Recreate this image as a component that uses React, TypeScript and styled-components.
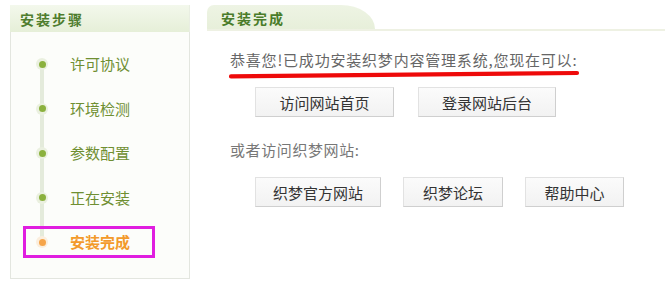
import React from 'react';
import styled, { createGlobalStyle } from 'styled-components';

const GlobalStyle = createGlobalStyle`
  html, body {
    margin: 0;
    padding: 0;
    background: #ffffff;
  }
  body {
    font-family: "Noto Sans CJK SC", "Noto Sans", sans-serif;
  }
`;

const steps = ['许可协议', '环境检测', '参数配置', '正在安装', '安装完成'];

const App = () => {
  return (
    <Page>
      <GlobalStyle />
      <Sidebar>
        <SideHeader>安装步骤</SideHeader>
        <SideBody>
          <StepList>
            {steps.map((s, i) => (
              <Step key={s} $active={i === steps.length - 1}>
                <Dot $active={i === steps.length - 1} />
                <StepLabel $active={i === steps.length - 1}>{s}</StepLabel>
              </Step>
            ))}
          </StepList>
        </SideBody>
      </Sidebar>

      <Main>
        <TabBar>
          <Tab>安装完成</Tab>
        </TabBar>
        <Content>
          <Message>恭喜您!已成功安装织梦内容管理系统,您现在可以:</Message>
          {/* hand-drawn red mark under the message */}
          <Underline width="352" height="9" viewBox="0 0 352 9">
            <path
              d="M3 6.4 C 90 6, 200 5.2, 349 3"
              stroke="#ee0a0a"
              strokeWidth="4.2"
              strokeLinecap="round"
              fill="none"
            />
          </Underline>
          <ButtonRow $top={8}>
            <Btn $w={139}>访问网站首页</Btn>
            <Btn $w={138}>登录网站后台</Btn>
          </ButtonRow>
          <SubText>或者访问织梦网站:</SubText>
          <ButtonRow $top={17} $gap={22}>
            <Btn $w={126}>织梦官方网站</Btn>
            <Btn $w={100}>织梦论坛</Btn>
            <Btn $w={99}>帮助中心</Btn>
          </ButtonRow>
        </Content>
      </Main>
    </Page>
  );
};

const Page = styled.div`
  display: flex;
  align-items: flex-start;
  width: 665px;
  height: 288px;
  padding: 5px 0 0 10px;
  box-sizing: border-box;
  overflow: hidden;
`;

const Sidebar = styled.div`
  width: 180px;
  display: flex;
  flex-direction: column;
`;

const SideHeader = styled.div`
  height: 27px;
  line-height: 28px;
  padding-left: 10px;
  font-size: 14px;
  font-weight: bold;
  letter-spacing: 2px;
  color: #4f7d2e;
  background: linear-gradient(to bottom, #f3f8ec 0%, #e6efd8 100%);
  border-right: 1px solid #e9eee2;
  box-sizing: border-box;
`;

const SideBody = styled.div`
  height: 247px;
  border: 1px solid #e3e6df;
  border-top: none;
  background: #fcfdfa;
  box-sizing: border-box;
  padding-top: 16px;
`;

const StepList = styled.div`
  position: relative;
  display: flex;
  flex-direction: column;
  gap: 12.5px;

  &::before {
    content: '';
    position: absolute;
    left: 29px;
    top: 16px;
    width: 4px;
    height: 178px;
    background: #e4ebdb;
  }
`;

const Step = styled.div<{ $active?: boolean }>`
  position: relative;
  display: flex;
  align-items: center;
  width: 132px;
  height: 32px;
  margin-left: 12px;
  box-sizing: border-box;
  border: 3px solid ${(p) => (p.$active ? '#e01ee0' : 'transparent')};
`;

const Dot = styled.span<{ $active?: boolean }>`
  position: relative;
  flex: none;
  width: 12px;
  height: 12px;
  margin-left: 10px;
  border-radius: 50%;
  background: ${(p) => (p.$active ? '#fbeedd' : '#eaf0df')};

  &::after {
    content: '';
    position: absolute;
    left: 2.5px;
    top: 2.5px;
    width: 7px;
    height: 7px;
    border-radius: 50%;
    background: ${(p) => (p.$active ? '#f6a54a' : '#8bb13e')};
  }
`;

const StepLabel = styled.span<{ $active?: boolean }>`
  margin-left: 22px;
  font-size: 15px;
  line-height: 20px;
  white-space: nowrap;
  font-weight: ${(p) => (p.$active ? 'bold' : 'normal')};
  color: ${(p) => (p.$active ? '#f39a2b' : '#6f8f32')};
`;

const Main = styled.div`
  flex: 1;
  margin-left: 17px;
  display: flex;
  flex-direction: column;
`;

const TabBar = styled.div`
  display: flex;
  border-bottom: 2px solid #eef1e3;
`;

const Tab = styled.div`
  width: 168px;
  height: 24px;
  line-height: 26px;
  padding-left: 14px;
  box-sizing: border-box;
  font-size: 14px;
  font-weight: bold;
  letter-spacing: 2px;
  color: #4a7c2a;
  background: linear-gradient(to bottom, #eef4e4 0%, #e7efda 100%);
  border-radius: 7px 34px 0 0 / 7px 24px 0 0;
`;

const Content = styled.div`
  display: flex;
  flex-direction: column;
  padding-left: 23px;
`;

const Message = styled.div`
  margin-top: 19px;
  font-size: 15px;
  line-height: 20px;
  letter-spacing: 0.8px;
  color: #666666;
  white-space: nowrap;
`;

const Underline = styled.svg`
  display: block;
  margin-top: 0;
  margin-left: -2px;
`;

const ButtonRow = styled.div<{ $top: number; $gap?: number }>`
  display: flex;
  gap: ${(p) => p.$gap ?? 24}px;
  margin-top: ${(p) => p.$top}px;
  margin-left: 25px;
`;

const Btn = styled.button<{ $w: number }>`
  width: ${(p) => p.$w}px;
  height: 30px;
  padding: 0;
  font-family: "Noto Sans CJK SC", "Noto Sans", sans-serif;
  font-size: 15px;
  color: #333333;
  background: linear-gradient(to bottom, #fbfbfb 0%, #f2f2f2 100%);
  border: 1px solid #e2e2e2;
  border-right-color: #cfcfcf;
  border-bottom-color: #cfcfcf;
  box-sizing: border-box;
  cursor: pointer;
`;

const SubText = styled.div`
  margin-top: 23px;
  font-size: 15px;
  line-height: 20px;
  letter-spacing: 0.6px;
  color: #777777;
`;

export default App;
